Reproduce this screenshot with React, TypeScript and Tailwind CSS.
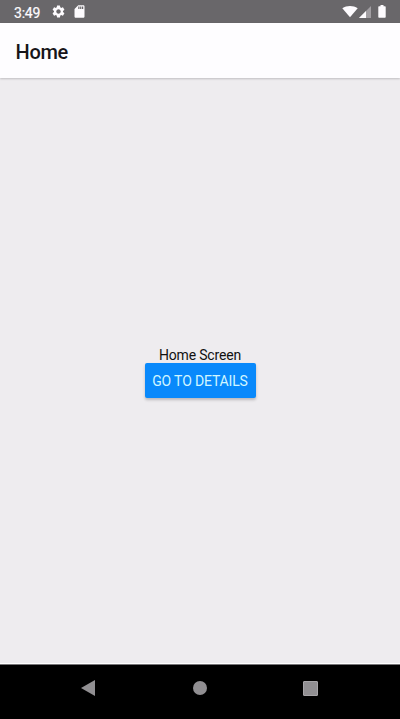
import React from "react";
import { MdSettings, MdSdCard } from "react-icons/md";

function StatusBar() {
  return (
    <div className="flex h-[23px] shrink-0 items-center bg-[#69676a] pl-[14px] pr-[14px] text-[#fdfbfe]">
      <span className="w-[37px] pt-[3px] text-[14px] leading-[20px] tracking-[-0.2px] [-webkit-text-stroke:0.2px]">3:49</span>
      <MdSettings className="h-[15px] w-[15px]" />
      <MdSdCard className="ml-[6px] h-[15px] w-[15px]" />
      <svg className="ml-auto" width="16" height="13" viewBox="0 0 16 13" fill="currentColor">
        <path d="M.3 3.200C4.800.1 11.200.1 15.700 3.200L8 12.300Z" />
      </svg>
      <svg className="ml-[1px]" width="12" height="12" viewBox="0 0 12 12" fill="currentColor">
        <path d="M12 0V12H0Z" opacity=".38" />
        <path d="M7 5V12H0Z" />
      </svg>
      <svg className="ml-[7px]" width="8" height="13" viewBox="0 0 8 13" fill="currentColor">
        <path d="M2.500 0h3v1.300H7a.7.7 0 0 1 .7.7v10a.7.7 0 0 1-.7.7H1a.7.7 0 0 1-.7-.7V2A.7.7 0 0 1 1 1.300h1.500Z" />
      </svg>
    </div>
  );
}

function NavigationBar() {
  return (
    <nav className="flex h-[55px] shrink-0 items-start border-t border-[#777578] bg-black pl-[81px] pt-[15px] text-[#918f92]">
      <svg width="14" height="16" viewBox="0 0 14 16" fill="currentColor">
        <path d="M0 8 14 0V16Z" />
      </svg>
      <div className="ml-[98px] mt-[1px] h-[14px] w-[14px] rounded-full bg-current" />
      <div className="ml-[96px] mt-[1px] h-[15px] w-[15px] rounded-[1px] border border-[#a7a5a8] bg-[#918f92]" />
    </nav>
  );
}

export default function App() {
  return (
    <div className="flex h-[719px] w-[400px] flex-col overflow-hidden bg-[#eeecef] font-[Roboto,sans-serif]">
      <StatusBar />
      <header className="relative flex h-[55px] shrink-0 items-center bg-[#fefdff] pl-[15.5px] pt-[2px] shadow-[0_1px_2px_rgba(0,0,0,0.2)]">
        <h1 className="text-[20px] font-medium leading-6 tracking-[-0.3px] text-[#171519]">Home</h1>
      </header>
      <main className="flex flex-1 flex-col items-center justify-center border-b border-white pt-[2px]">
        <p className="pt-[2px] text-[14px] leading-[15px] tracking-[-0.16px] text-[#111]">Home Screen</p>
        <button className="h-[35px] w-[111px] rounded-[2px] bg-[#0989fb] pt-[1px] text-[14px] leading-5 tracking-[-0.15px] text-[#d2f6ff] shadow-[0_2px_3px_rgba(0,0,0,0.22)]">
          GO TO DETAILS
        </button>
      </main>
      <NavigationBar />
    </div>
  );
}
